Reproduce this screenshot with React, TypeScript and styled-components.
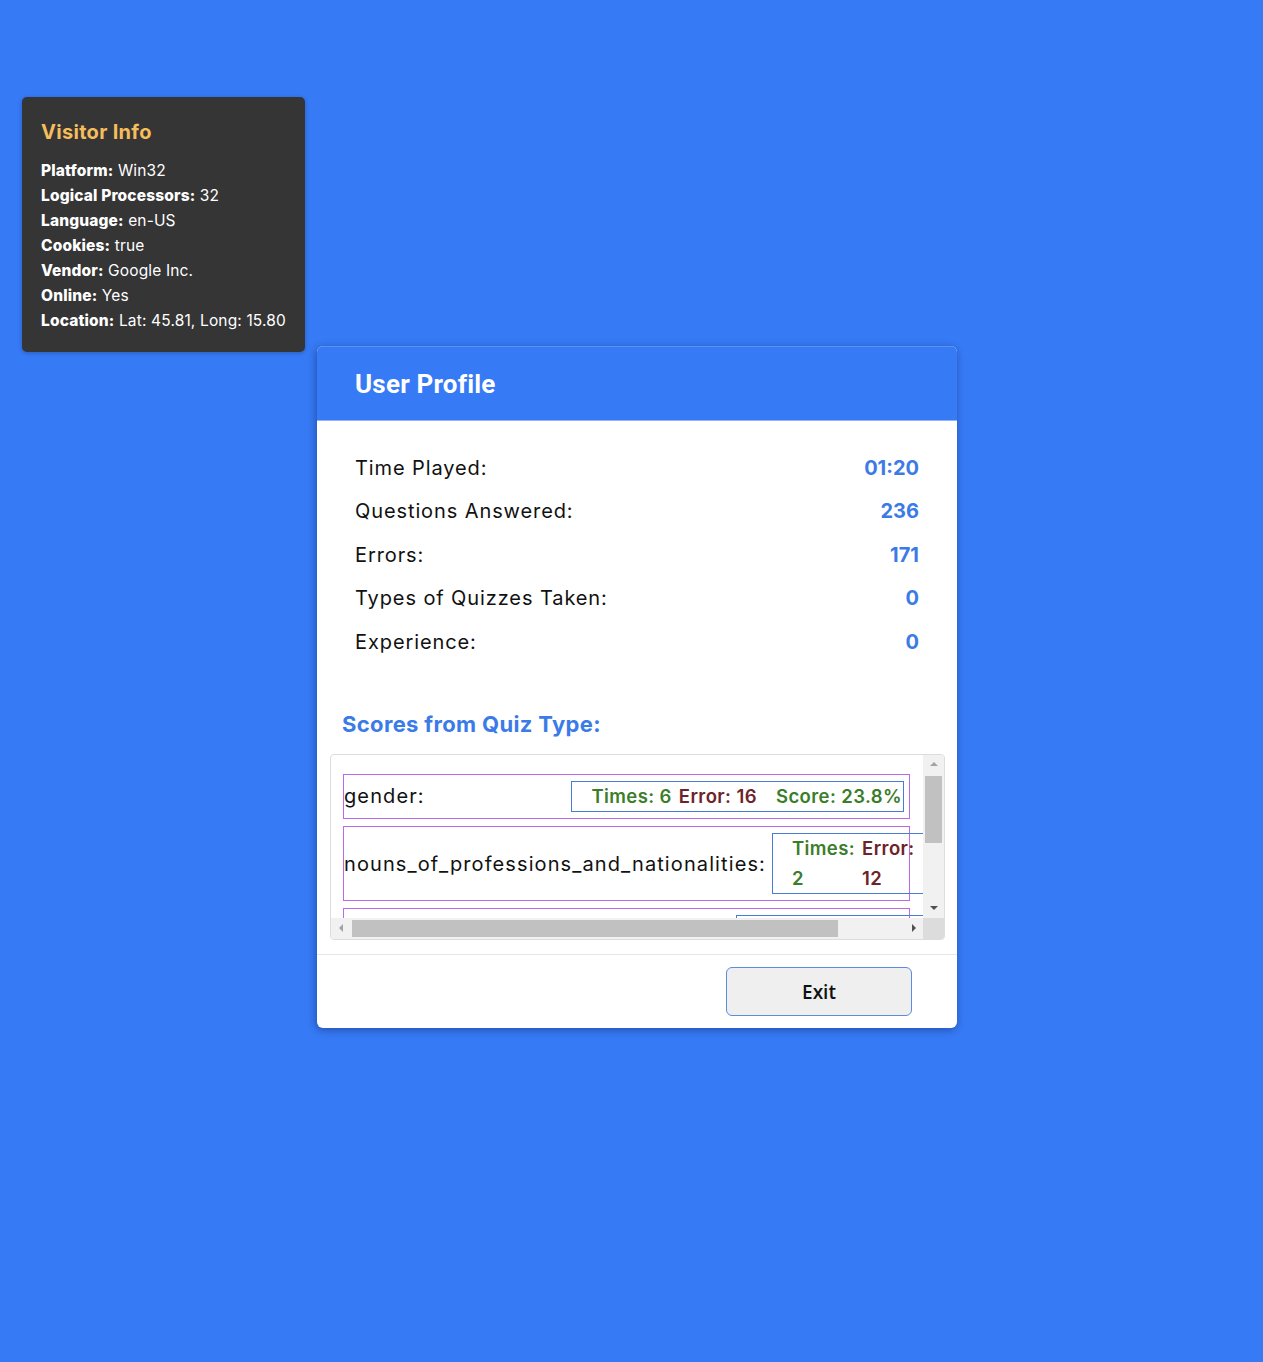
import React from "react";
import styled, { createGlobalStyle, css } from "styled-components";

const FONT = `"Inter", "Open Sans", "Liberation Sans", sans-serif`;

const GlobalStyle = createGlobalStyle`
  html, body {
    margin: 0;
    padding: 0;
    background: #367af6;
  }
  body {
    font-family: ${FONT};
    color: #111;
  }
  * { box-sizing: border-box; }
`;

const Page = styled.div`
  position: relative;
  min-height: 1362px;
  display: flex;
  align-items: flex-start;
  justify-content: center;
  padding: 346px 0 0 11px;
`;

const VisitorCard = styled.aside`
  position: absolute;
  top: 97px;
  left: 22px;
  background: #353535;
  border-radius: 5px;
  padding: 21px 19px 19px 19px;
  color: #fff;
  box-shadow: 0 1px 4px rgba(0, 0, 0, 0.25);
`;

const VisitorTitle = styled.h3`
  margin: 0 0 12px;
  font-size: 20px;
  line-height: 28px;
  font-weight: 700;
  color: #f5bd5c;
  letter-spacing: 0.3px;
`;

const InfoLine = styled.div`
  font-size: 15.5px;
  line-height: 25px;
  white-space: nowrap;
  letter-spacing: 0.15px;
  b {
    font-weight: 800;
  }
`;

const Modal = styled.section`
  width: 640px;
  background: #fff;
  border-radius: 6px;
  overflow: hidden;
  box-shadow: -1px 2px 8px rgba(0, 0, 40, 0.35);
`;

const Header = styled.header`
  height: 75px;
  background: #367af6;
  border-top: 1px solid #5a91f5;
  border-bottom: 1px solid #8fb4f7;
  display: flex;
  align-items: center;
  padding-left: 38px;
`;

const HeaderTitle = styled.h2`
  margin: 0;
  font-family: Roboto, "Liberation Sans", sans-serif;
  font-weight: 700;
  font-size: 26px;
  color: #fff;
  letter-spacing: 0.2px;
`;

const Body = styled.div`
  padding: 25px 12px 14px 13px;
`;

const Stats = styled.div`
  padding: 0 26px 0 25px;
`;

const StatRow = styled.div`
  display: flex;
  justify-content: space-between;
  align-items: center;
  height: 43.5px;
  font-size: 20px;
`;

const StatLabel = styled.span`
  letter-spacing: 0.9px;
`;

const StatValue = styled.span`
  font-weight: 700;
  color: #3c7be6;
`;

const ScoresTitle = styled.h3`
  margin: 45px 0 15px 12px;
  font-size: 22px;
  line-height: 30px;
  font-weight: 700;
  color: #3b7be8;
  letter-spacing: 0.35px;
`;

/* Scroll frame with a drawn classic scrollbar */
const ScrollFrame = styled.div`
  height: 186px;
  border: 1px solid #dcdcdc;
  border-radius: 4px;
  overflow: hidden;
  display: grid;
  grid-template-columns: 1fr 21px;
  grid-template-rows: 1fr 21px;
`;

const Viewport = styled.div`
  overflow: hidden;
  padding: 19px 13px 0 12px;
  display: flex;
  flex-direction: column;
  gap: 7px;
  min-width: 0;
  min-height: 0;
`;

const VBar = styled.div`
  background: #f1f1f1;
  display: flex;
  flex-direction: column;
`;

const HBar = styled.div`
  background: #f1f1f1;
  display: flex;
`;

const Corner = styled.div`
  background: #dcdcdc;
`;

const BarButton = styled.div`
  flex: 0 0 19px;
  display: flex;
  align-items: center;
  justify-content: center;
`;

const Track = styled.div<{ $vertical: boolean }>`
  flex: 1;
  display: flex;
  flex-direction: ${(p) => (p.$vertical ? "column" : "row")};
  padding: 2px;
`;

const Thumb = styled.div<{ $vertical: boolean; $size: number }>`
  background: #c1c1c1;
  ${(p) =>
    p.$vertical
      ? css`
          width: 100%;
          height: ${p.$size}px;
        `
      : css`
          height: 100%;
          width: ${p.$size}px;
        `}
`;

type Dir = "up" | "down" | "left" | "right";

const Arrow = styled.span<{ $dir: Dir; $active: boolean }>`
  width: 0;
  height: 0;
  border: 4px solid transparent;
  ${(p) => {
    const c = p.$active ? "#505050" : "#a3a3a3";
    switch (p.$dir) {
      case "up":
        return css`border-bottom-color: ${c}; border-top-width: 0;`;
      case "down":
        return css`border-top-color: ${c}; border-bottom-width: 0;`;
      case "left":
        return css`border-right-color: ${c}; border-left-width: 0;`;
      default:
        return css`border-left-color: ${c}; border-right-width: 0;`;
    }
  }}
`;

const QuizRow = styled.div`
  display: flex;
  justify-content: space-between;
  align-items: center;
  border: 1px solid #bb6ae9;
  padding: 6px 5px 6px 0;
  flex-shrink: 0;
`;

const QuizLabel = styled.span`
  font-size: 20px;
  white-space: nowrap;
  letter-spacing: 1.1px;
`;

const ScoreBox = styled.div`
  display: flex;
  align-items: center;
  border: 1px solid #4a7bd6;
  padding: 0 1px 0 19px;
  margin-left: 6px;
  min-width: 230px;
  flex-shrink: 1;
`;

const ScoreItem = styled.span<{ $tone: "good" | "bad"; $gap: number }>`
  font-size: 18.5px;
  line-height: 29.5px;
  font-weight: 600;
  margin-left: ${(p) => p.$gap}px;
  color: ${(p) => (p.$tone === "good" ? "#3a7e2a" : "#6d2329")};
  letter-spacing: 0.4px;
`;

const Footer = styled.footer`
  border-top: 1px solid #e6e6e6;
  display: flex;
  justify-content: flex-end;
  padding: 12px 45px 12px 0;
`;

const ExitButton = styled.button`
  width: 186px;
  height: 49px;
  background: #efefef;
  border: 1px solid #5b8be2;
  border-radius: 6px;
  font-family: "Open Sans", "Noto Sans", sans-serif;
  font-weight: 600;
  font-size: 19px;
  line-height: 1;
  padding: 2px 0 0;
  color: #111;
  cursor: pointer;
`;

const visitor: [string, string][] = [
  ["Platform:", "Win32"],
  ["Logical Processors:", "32"],
  ["Language:", "en-US"],
  ["Cookies:", "true"],
  ["Vendor:", "Google Inc."],
  ["Online:", "Yes"],
  ["Location:", "Lat: 45.81, Long: 15.80"],
];

const stats: [string, string][] = [
  ["Time Played:", "01:20"],
  ["Questions Answered:", "236"],
  ["Errors:", "171"],
  ["Types of Quizzes Taken:", "0"],
  ["Experience:", "0"],
];

const quizzes = [
  { name: "gender:", times: 6, errors: 16, score: "23.8%" },
  { name: "nouns_of_professions_and_nationalities:", times: 2, errors: 12, score: "14.3%" },
  { name: "verbs_in_present_tense_conjugation:", times: 3, errors: 9, score: "25.0%" },
  { name: "articles:", times: 1, errors: 2, score: "60.0%" },
];

export default function App() {
  return (
    <>
      <GlobalStyle />
      <Page>
        <VisitorCard>
          <VisitorTitle>Visitor Info</VisitorTitle>
          {visitor.map(([k, v]) => (
            <InfoLine key={k}>
              <b>{k}</b> {v}
            </InfoLine>
          ))}
        </VisitorCard>
        <Modal>
          <Header>
            <HeaderTitle>User Profile</HeaderTitle>
          </Header>
          <Body>
            <Stats>
              {stats.map(([k, v]) => (
                <StatRow key={k}>
                  <StatLabel>{k}</StatLabel>
                  <StatValue>{v}</StatValue>
                </StatRow>
              ))}
            </Stats>
            <ScoresTitle>Scores from Quiz Type:</ScoresTitle>
            <ScrollFrame>
              <Viewport>
                {quizzes.map((q) => (
                  <QuizRow key={q.name}>
                    <QuizLabel>{q.name}</QuizLabel>
                    <ScoreBox>
                      <ScoreItem $tone="good" $gap={0}>Times: {q.times}</ScoreItem>
                      <ScoreItem $tone="bad" $gap={7}>Error: {q.errors}</ScoreItem>
                      <ScoreItem $tone="good" $gap={19}>Score: {q.score}</ScoreItem>
                    </ScoreBox>
                  </QuizRow>
                ))}
              </Viewport>
              <VBar>
                <BarButton>
                  <Arrow $dir="up" $active={false} />
                </BarButton>
                <Track $vertical>
                  <Thumb $vertical $size={67} />
                </Track>
                <BarButton>
                  <Arrow $dir="down" $active />
                </BarButton>
              </VBar>
              <HBar>
                <BarButton>
                  <Arrow $dir="left" $active={false} />
                </BarButton>
                <Track $vertical={false}>
                  <Thumb $vertical={false} $size={486} />
                </Track>
                <BarButton>
                  <Arrow $dir="right" $active />
                </BarButton>
              </HBar>
              <Corner />
            </ScrollFrame>
          </Body>
          <Footer>
            <ExitButton>Exit</ExitButton>
          </Footer>
        </Modal>
      </Page>
    </>
  );
}
